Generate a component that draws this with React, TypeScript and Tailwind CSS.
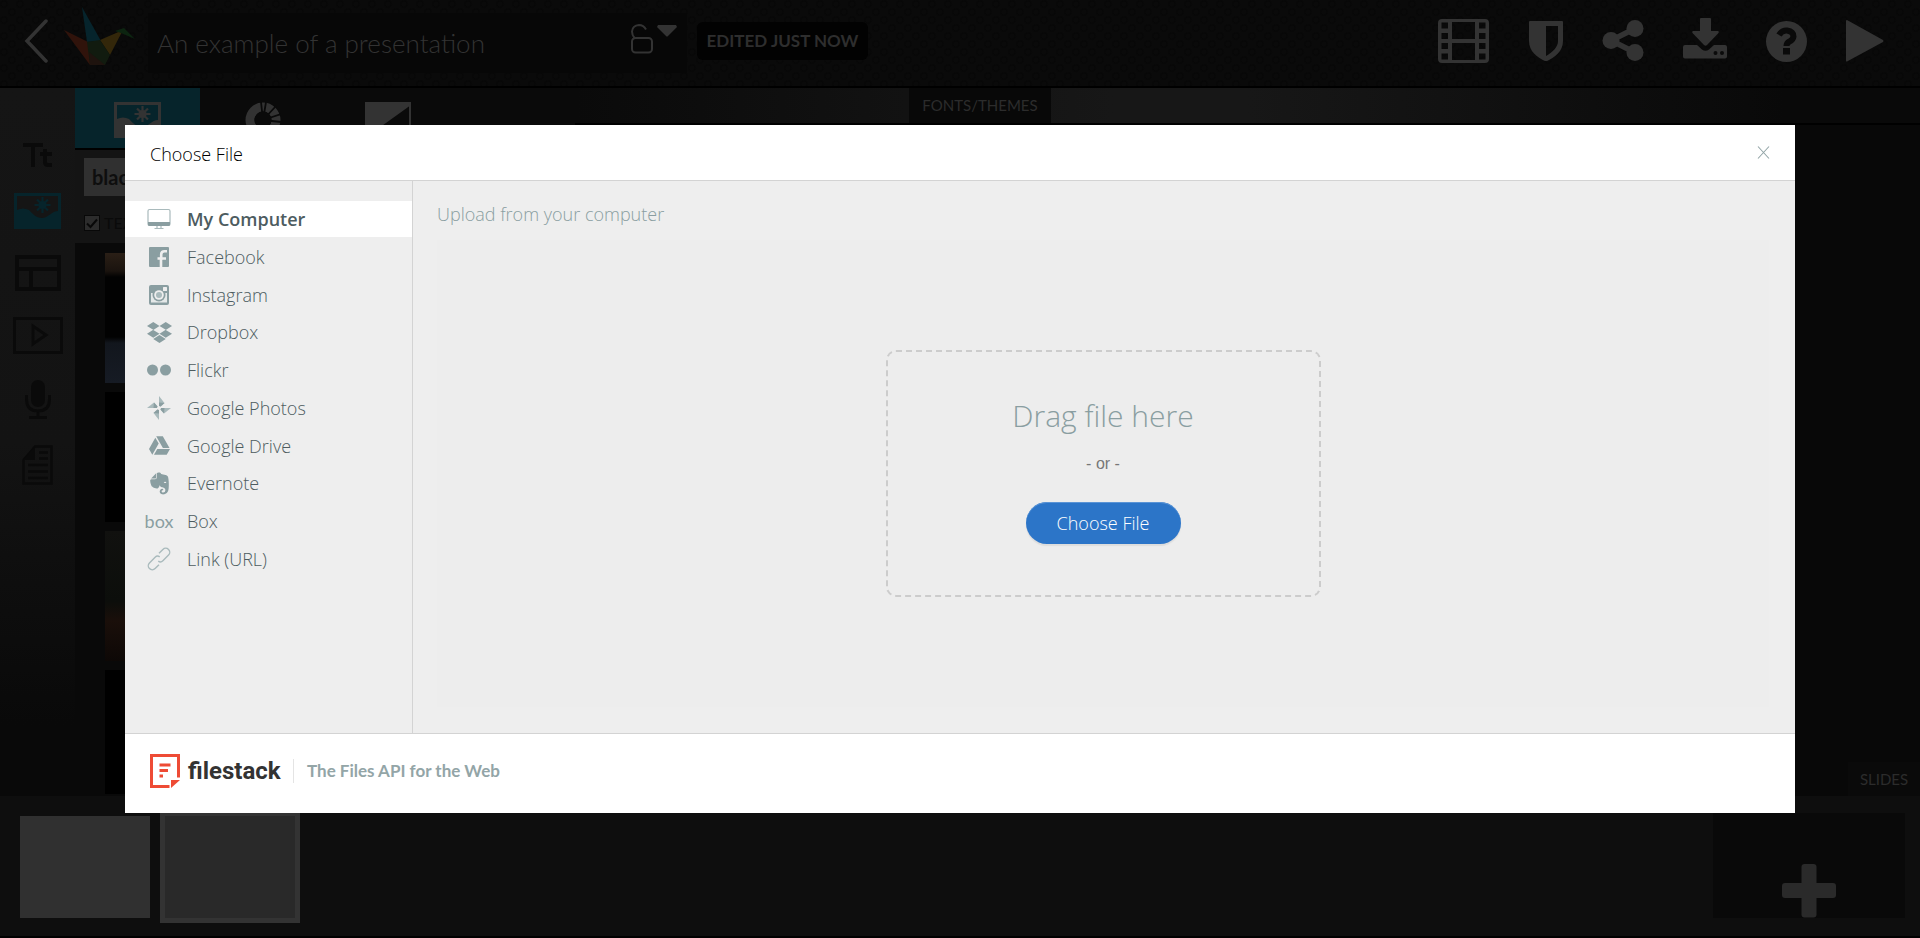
import type { ReactNode } from "react";
import { FaDropbox, FaEvernote, FaGoogleDrive } from "react-icons/fa";

const ACCENT = "#8a9ea1";
const ACCENT_LIGHT = "#a9babc";

function CraneLogo() {
  return (
    <svg width="72" height="60" viewBox="0 0 72 60" aria-hidden="true">
      <path d="M18 0 L37 34 L23 35 Z" fill="#06242c" />
      <path d="M0 23 L24 35 L36 58 L26 58 Z" fill="#30130b" />
      <path d="M36 33 L59 23 L46 48 Z" fill="#33270a" />
      <path d="M51 24 L60 21 L71 32 L57 26 Z" fill="#0c2410" />
      <path d="M23 35 L36 33 L46 48 L41 58 L26 58 L25 50 Z" fill="#111b0f" />
      <path d="M25 45 L41 58 L26 58 Z" fill="#1e130e" />
    </svg>
  );
}

function PictureIcon({ hole }: { hole: string }) {
  return (
    <svg width="48" height="36" viewBox="0 0 48 36" aria-hidden="true">
      <rect width="47" height="36" fill="currentColor" />
      <path d="M3 3 H44 V18 C38 18 34 25 28 25 C22 25 19 21 15 17 C11 15 7 15 3 17 Z" fill={hole} />
      <path d="M28.500 4 V20 M20.500 12 H36.500 M23 6.500 L34 17.500 M34 6.500 L23 17.500" stroke="currentColor" strokeWidth="2.200" />
      <circle cx="28.500" cy="12" r="4" fill="currentColor" />
    </svg>
  );
}

const toolbar: { name: string; icon: ReactNode }[] = [
  {
    name: "Slides video",
    icon: (
      <svg width="52" height="44" viewBox="0 0 52 44">
        <path fillRule="evenodd" d="M4 0 H47 Q51 0 51 4 V40 Q51 44 47 44 H4 Q0 44 0 40 V4 Q0 0 4 0 Z M14 3 V20 H37 V3 Z M14 24 V41 H37 V24 Z M3.500 3.500 V9.500 H10 V3.500 Z M3.500 14 V20 H10 V14 Z M3.500 24 V30 H10 V24 Z M3.500 34.500 V40.500 H10 V34.500 Z M41 3.500 V9.500 H47.500 V3.500 Z M41 14 V20 H47.500 V14 Z M41 24 V30 H47.500 V24 Z M41 34.500 V40.500 H47.500 V34.500 Z" fill="currentColor" />
      </svg>
    ),
  },
  {
    name: "Privacy",
    icon: (
      <svg width="34" height="40" viewBox="0 0 34 40">
        <path fillRule="evenodd" d="M1 0 H33 Q34 0 34 1 V20 C34 31 25 37 17 40.500 C9 37 0 31 0 20 V1 Q0 0 1 0 Z M17 5 V35 C24 31 29 26 29 20 V5 Z" fill="currentColor" />
      </svg>
    ),
  },
  {
    name: "Share",
    icon: (
      <svg width="42" height="42" viewBox="0 0 42 42">
        <path d="M33 8.500 L9 20.500 L33 32.500" fill="none" stroke="currentColor" strokeWidth="5.500" />
        <circle cx="33" cy="8.500" r="8.500" fill="currentColor" />
        <circle cx="9" cy="20.500" r="8.500" fill="currentColor" />
        <circle cx="33" cy="32.500" r="8.500" fill="currentColor" />
      </svg>
    ),
  },
  {
    name: "Download",
    icon: (
      <svg width="44" height="46" viewBox="0 0 44 46">
        <path d="M18 0 H27 Q28 0 28 1 V13 H35 Q36.500 13.500 35.500 15 L24 27 Q22.500 28.500 21 27 L9.500 15 Q8.500 13.500 10 13 H17 V1 Q17 0 18 0 Z" fill="currentColor" />
        <path fillRule="evenodd" d="M2 27 H14 L19 31.500 Q22.500 34 26 31.500 L31 27 H42 Q44 27 44 29 V38.500 Q44 40.500 42 40.500 H2 Q0 40.500 0 38.500 V29 Q0 27 2 27 Z M30.500 35 a2 2 0 1 0 4 0 a2 2 0 1 0 -4 0 M37 35 a2 2 0 1 0 4 0 a2 2 0 1 0 -4 0" fill="currentColor" />
      </svg>
    ),
  },
  {
    name: "Help",
    icon: (
      <svg width="41" height="41" viewBox="0 0 41 41">
        <circle cx="20.500" cy="20.500" r="20.500" fill="currentColor" />
        <path d="M13 14 Q16 9 21 9.500 Q27.500 10.500 27.500 15.500 Q27 19 23.500 20.500 Q20.500 22 20.500 25" fill="none" stroke="#0a0a0a" strokeWidth="6" />
        <rect x="17" y="27" width="7" height="6.500" fill="#0a0a0a" />
      </svg>
    ),
  },
  {
    name: "Play",
    icon: (
      <svg width="38" height="42" viewBox="0 0 38 42">
        <path d="M1 0 L37 20 Q38 21 37 22 L1 41.500 Q0 41.500 0 41 V1 Q0 0 1 0 Z" fill="currentColor" />
      </svg>
    ),
  },
];

const rail: { name: string; className: string; icon: ReactNode }[] = [
  {
    name: "Text",
    className: "text-[#0a0a0a]",
    icon: (
      <svg width="30" height="24" viewBox="0 0 30 24">
        <path d="M0 2 H20 M10 2 V24" stroke="currentColor" strokeWidth="4" fill="none" />
        <path d="M22 6 V19 Q22 22 25 22 H29 M17 11 H29" stroke="currentColor" strokeWidth="4" fill="none" />
      </svg>
    ),
  },
  { name: "Images", className: "text-[#06242b]", icon: <PictureIcon hole="#151515" /> },
  {
    name: "Layouts",
    className: "text-[#0a0a0a]",
    icon: (
      <svg width="46" height="36" viewBox="0 0 46 36">
        <path d="M2 2 H44 V34 H2 Z M2 14 H44 M16 14 V34" fill="none" stroke="currentColor" strokeWidth="4" />
      </svg>
    ),
  },
  {
    name: "Video",
    className: "text-[#0a0a0a]",
    icon: (
      <svg width="50" height="37" viewBox="0 0 50 37">
        <path d="M1.500 1.500 H48.500 V35.500 H1.500 Z M20 9 V27 L33 18 Z" fill="none" stroke="currentColor" strokeWidth="3" />
      </svg>
    ),
  },
  {
    name: "Audio",
    className: "text-[#0a0a0a]",
    icon: (
      <svg width="26" height="39" viewBox="0 0 26 39">
        <rect x="6" y="0" width="14" height="27" rx="7" fill="currentColor" />
        <path d="M1.500 15 V19 Q1.500 31 13 31 Q24.500 31 24.500 19 V15 M13 31 V37 M4 37.500 H22" fill="none" stroke="currentColor" strokeWidth="3" />
      </svg>
    ),
  },
  {
    name: "Notes",
    className: "text-[#0a0a0a]",
    icon: (
      <svg width="31" height="40" viewBox="0 0 31 40">
        <path d="M1.500 15 L13 1.500 H29.500 V38.500 H1.500 Z M6 20 H26 M6 26.500 H26 M6 33 H26 M17 7.500 H26 M17 13.500 H26" fill="none" stroke="currentColor" strokeWidth="2.500" />
        <path d="M1 15 L13 1 V15 Z" fill="currentColor" />
      </svg>
    ),
  },
];

const sources: { name: string; icon: ReactNode }[] = [
  {
    name: "My Computer",
    icon: (
      <svg width="24" height="24" viewBox="0 0 24 24">
        <rect x="1" y="2.500" width="22" height="16" rx="1.500" fill="none" stroke={ACCENT_LIGHT} strokeWidth="1.200" />
        <path d="M1 15 H23 V17.500 Q23 19 21.500 19 H2.500 Q1 19 1 17.500 Z" fill={ACCENT} />
        <path d="M10 19 V21 M14 19 V21 M7.500 21.500 H16.500" stroke={ACCENT_LIGHT} strokeWidth="1.200" />
      </svg>
    ),
  },
  {
    name: "Facebook",
    icon: (
      <svg width="24" height="24" viewBox="0 0 24 24">
        <rect x="2" y="2" width="20" height="20" rx="1" fill={ACCENT} />
        <path d="M14 22 V14 M10.500 13.500 H19 M14.200 15 V9.500 Q14.200 6.200 17.500 6.200 H20" fill="none" stroke="#eeeeee" strokeWidth="2.600" />
      </svg>
    ),
  },
  {
    name: "Instagram",
    icon: (
      <svg width="24" height="24" viewBox="0 0 24 24">
        <rect x="2" y="2" width="20" height="20" rx="2" fill={ACCENT} />
        <path d="M4 10 H20 V19.500 H4 Z" fill="#e4e8e8" />
        <circle cx="12" cy="12" r="6.500" fill={ACCENT} />
        <circle cx="12" cy="12" r="4.800" fill="#eeeeee" />
        <circle cx="12" cy="12" r="3" fill={ACCENT_LIGHT} />
        <rect x="16" y="4" width="4" height="4" rx="0.500" fill="#eeeeee" />
      </svg>
    ),
  },
  { name: "Dropbox", icon: <FaDropbox size={25} color={ACCENT} className="shrink-0" /> },
  {
    name: "Flickr",
    icon: (
      <svg width="24" height="24" viewBox="0 0 24 24">
        <circle cx="5.500" cy="12" r="5.500" fill={ACCENT} />
        <circle cx="18.500" cy="12" r="5.500" fill={ACCENT} />
      </svg>
    ),
  },
  {
    name: "Google Photos",
    icon: (
      <svg width="24" height="24" viewBox="0 0 24 24">
        {[0, 90, 180, 270].map((angle) => (
          <g key={angle} transform={`rotate(${angle} 12 12)`}>
            <path d="M12 0 L17.500 7 L12 12 Z" fill={ACCENT_LIGHT} />
            <path d="M12 6.500 L17.500 7 L12 12 Z" fill={ACCENT} />
          </g>
        ))}
        <circle cx="12" cy="12" r="2" fill="#eeeeee" />
      </svg>
    ),
  },
  { name: "Google Drive", icon: <FaGoogleDrive size={21} color={ACCENT} /> },
  { name: "Evernote", icon: <FaEvernote size={25} color={ACCENT} className="shrink-0" /> },
  {
    name: "Box",
    icon: <span className="font-['Lato',sans-serif] text-lg font-normal leading-6 text-[#8a9ea1]">box</span>,
  },
  {
    name: "Link (URL)",
    icon: (
      <svg width="24" height="24" viewBox="0 0 24 24">
        <g transform="rotate(-45 12 12)" fill="none" stroke={ACCENT_LIGHT} strokeWidth="1.400">
          <path d="M8 16 H2.500 A4 4 0 0 1 2.500 8 H10.500 Q13.500 8 14 11" />
          <path d="M16 8 H21.500 A4 4 0 0 1 21.500 16 H13.500 Q10.500 16 10 13" />
        </g>
      </svg>
    ),
  },
];

const thumbs = [
  "h-[130px] bg-[linear-gradient(to_bottom,#2a1f16_0,#1a130e_18px,#020202_24px,#020202_84px,#12161d_90px,#161b24_130px)]",
  "h-[130px] bg-black",
  "h-[130px] bg-[linear-gradient(to_bottom,#11110f_0,#0c0e0b_70px,#1a0f0a_90px,#0d0806_130px)]",
  "flex-1 bg-black",
];

function Header() {
  return (
    <header className="flex h-[88px] shrink-0 items-center border-b-2 border-black bg-[#0a0a0a] bg-[radial-gradient(circle_at_4px_4px,#0a0a0a_2px,#070707_3px,transparent_5px),radial-gradient(circle_at_12px_12px,#0a0a0a_2px,#070707_3px,transparent_5px)] bg-size-[16px_16px] text-[#333333]">
      <button aria-label="Back" className="mb-1 ml-6">
        <svg width="24" height="44" viewBox="0 0 24 44">
          <path d="M22 2 L3 22 L22 42" fill="none" stroke="currentColor" strokeWidth="3.500" strokeLinecap="round" />
        </svg>
      </button>
      <div className="mb-3 ml-4">
        <CraneLogo />
      </div>
      <div className="ml-3 flex h-[60px] w-[539px] items-center bg-[#070707] pl-[9px] pr-[10px]">
        <input
          aria-label="Presentation title"
          defaultValue="An example of a presentation"
          className="min-w-0 flex-1 bg-transparent font-['Lato',sans-serif] text-[26px] font-light text-[#333333] outline-none"
        />
        <button aria-label="Sharing" className="mb-2 flex gap-1">
          <svg width="22" height="30" viewBox="0 0 22 30">
            <rect x="1" y="14" width="20" height="14.500" rx="3.500" fill="none" stroke="currentColor" strokeWidth="2" />
            <path d="M3.500 14 Q1 11 1 7.500 Q1.500 1.500 8 1 Q12.500 1 15 5.500" fill="none" stroke="currentColor" strokeWidth="2" />
          </svg>
          <svg width="20" height="14" viewBox="0 0 20 14">
            <path d="M1 1 H19 L20 3 L11 12 Q10 13 9 12 L0 3 Z" fill="currentColor" />
          </svg>
        </button>
      </div>
      <span className="mb-1 ml-[10px] flex h-[38px] w-[171px] items-center justify-center whitespace-nowrap rounded-md bg-[#020202] font-['Lato',sans-serif] text-[17px] font-bold text-[#2e2e2e]">
        EDITED JUST NOW
      </span>
      <nav className="mb-1 ml-auto mr-9 flex items-center gap-[39px]">
        {toolbar.map((t) => (
          <button key={t.name} aria-label={t.name}>
            {t.icon}
          </button>
        ))}
      </nav>
    </header>
  );
}

function Workspace() {
  return (
    <div className="flex min-h-0 flex-1 bg-[#080808]">
      <nav className="flex w-[75px] shrink-0 flex-col items-center gap-[26px] bg-[linear-gradient(to_bottom,#151515_0,#131313_50%,#090909_90%)] pt-[55px]">
        {rail.map((r) => (
          <button key={r.name} aria-label={r.name} className={r.className}>
            {r.icon}
          </button>
        ))}
      </nav>
      <aside className="flex w-[500px] shrink-0 flex-col">
        <div className="flex h-[62px] shrink-0 border-b-2 border-black bg-[#0a0a0a] text-[#333333]">
          <button aria-label="Pictures" className="flex w-[125px] justify-center bg-[#06242b] pt-[14px]">
            <PictureIcon hole="#06242b" />
          </button>
          <button aria-label="Shapes" className="flex w-[125px] justify-center pt-[14px]">
            <svg width="36" height="36" viewBox="0 0 36 36">
              <circle cx="18" cy="18" r="13" fill="none" stroke="currentColor" strokeWidth="9" />
              <path d="M18 18 L16 0 M18 18 L21 0 M18 18 L31 4 M18 18 L36 12 M18 18 L36 20" stroke="#0a0a0a" strokeWidth="1.800" />
              <circle cx="18" cy="18" r="8.500" fill="#0a0a0a" />
            </svg>
          </button>
          <button aria-label="Backgrounds" className="flex w-[125px] justify-center pt-[14px]">
            <svg width="46" height="36" viewBox="0 0 46 36">
              <rect x="1" y="1" width="44" height="34" fill="none" stroke="currentColor" strokeWidth="2" />
              <path d="M0 0 H46 V3 L0 36 Z" fill="currentColor" />
            </svg>
          </button>
        </div>
        <div className="h-[93px] shrink-0 bg-[#141414] px-[9px] pt-2">
          <input
            aria-label="Search"
            defaultValue="black"
            className="h-[38px] w-full bg-[#303030] px-2 font-['Lato',sans-serif] text-xl font-bold text-[#0e0e0e] outline-none"
          />
          <label className="mt-[15px] flex items-center gap-1 font-['Lato',sans-serif] text-base leading-6 text-[#0a0a0a]">
            <span className="grid size-4">
              <input
                type="checkbox"
                defaultChecked
                className="peer col-start-1 row-start-1 size-4 appearance-none border border-[#080808] bg-[#2c2c2c]"
              />
              <svg
                viewBox="0 0 16 16"
                className="pointer-events-none invisible col-start-1 row-start-1 size-4 peer-checked:visible"
              >
                <path d="M3 8.500 L6.500 12 L13 4.500" fill="none" stroke="#080808" strokeWidth="2" />
              </svg>
            </span>
            TEXT
          </label>
        </div>
        <div className="flex min-h-0 flex-1 flex-col gap-[9px] bg-[#090909] pl-[30px] pt-[10px] pb-[2px]">
          {thumbs.map((t, i) => (
            <div key={i} className={`w-[200px] shrink-0 ${t}`} />
          ))}
        </div>
      </aside>
      <main className="flex min-w-0 flex-1 flex-col">
        <div className="flex h-[37px] shrink-0 border-b-2 border-black bg-[linear-gradient(to_right,#0a0a0a_0,#171717_40%,#171717_50%,#090909_90%)] pl-[334px]">
          <button className="w-[142px] whitespace-nowrap bg-[#080808] font-['Lato',sans-serif] text-[15px] text-[#2c2c2c]">
            FONTS/THEMES
          </button>
        </div>
        <div className="flex flex-1 items-end justify-end">
          <span className="flex h-[34px] w-[72px] items-center justify-center bg-[#0a0a0a] font-['Lato',sans-serif] text-[15px] text-[#2c2c2c]">
            SLIDES
          </span>
        </div>
      </main>
    </div>
  );
}

function SlideStrip() {
  return (
    <section className="flex h-[142px] shrink-0 items-start border-b-2 border-black bg-[#0e0e0e] pl-5 pr-[15px] pt-[15px]">
      <button aria-label="Slide 1" className="mt-[5px] h-[102px] w-[130px] bg-[#303030]" />
      <button aria-label="Slide 2" className="ml-[10px] h-[112px] w-[140px] border-[5px] border-[#333333] bg-[#292929]" />
      <button
        aria-label="Add slide"
        className="ml-auto mt-[2px] flex h-[105px] w-[192px] items-end justify-center bg-[#090909] text-[#2a2a2a]"
      >
        <svg width="54" height="54" viewBox="0 0 54 54">
          <rect x="19.500" width="15" height="53.500" rx="3" fill="currentColor" />
          <rect y="19" width="54" height="15" rx="3" fill="currentColor" />
        </svg>
      </button>
    </section>
  );
}

function FilePicker() {
  return (
    <div
      role="dialog"
      aria-label="Choose File"
      className="absolute inset-[125px] flex flex-col bg-white font-['Open_Sans',sans-serif] text-lg font-light"
    >
      <header className="flex h-14 shrink-0 items-center justify-between border-b border-[#d3d3d3] px-[25px]">
        <h1 className="pt-[2px] text-black">Choose File</h1>
        <button aria-label="Close">
          <svg width="13" height="13" viewBox="0 0 13 13">
            <path d="M1 0.500 L12 12.500 M12 0.500 L1 12.500" stroke="#93a5a7" strokeWidth="1.100" />
          </svg>
        </button>
      </header>
      <div className="flex min-h-0 flex-1 bg-[#eeeeee]">
        <nav className="w-72 shrink-0 border-r border-[#d3d3d3] pt-5">
          <ul className="flex h-[376px] flex-col justify-between text-[#4d5c5f]">
            {sources.map((s, i) => (
              <li key={s.name}>
                <a
                  href="#"
                  className={
                    i === 0
                      ? "flex h-9 items-center bg-white pl-[22px] font-semibold"
                      : "flex h-9 items-center pl-[22px]"
                  }
                >
                  <span className="flex w-6 shrink-0 justify-center">{s.icon}</span>
                  <span className="pl-4">{s.name}</span>
                </a>
              </li>
            ))}
          </ul>
        </nav>
        <section className="flex min-w-0 flex-1 flex-col pb-[26px] pl-6 pr-[26px] pt-[19px]">
          <h2 className="leading-7 text-[#8a9ea1]">Upload from your computer</h2>
          <div className="mt-3 flex flex-1 items-center justify-center bg-[#ededed]">
            <div className="flex h-[247px] w-[435px] flex-col items-center rounded-[10px] border-2 border-dashed border-[#cccccc] pt-[42px]">
              <p className="text-3xl leading-[44px] text-[#8a9ea1]">Drag file here</p>
              <p className="mt-[14px] font-['Liberation_Sans',sans-serif] text-base font-normal text-[#777777]">- or -</p>
              <button className="mt-[26px] h-[42px] w-[155px] rounded-full bg-[#2c75c8] text-white shadow-[inset_0_1px_0_#5a94d6,0_2px_1px_#dddddd]">
                Choose File
              </button>
            </div>
          </div>
        </section>
      </div>
      <footer className="flex h-20 shrink-0 items-center border-t border-[#d3d3d3] pb-[5px] pl-[25px]">
        <svg width="30" height="34" viewBox="0 0 30 34" aria-hidden="true">
          <path d="M28.500 23.500 V1.500 H1.500 V32.500 H19.500" fill="none" stroke="#ee4b35" strokeWidth="3" />
          <path d="M21 26 H30 L21 34 Z" fill="#ee4b35" />
          <path d="M9.500 11 H20.500 M9.500 16.500 H18 M9.500 22 H13" stroke="#ee4b35" strokeWidth="3" />
        </svg>
        <span className="ml-2 w-[91px] whitespace-nowrap font-['Roboto',sans-serif] text-2xl font-bold text-[#333333]">
          filestack
        </span>
        <span className="ml-[14px] h-6 w-px bg-[#e4e4e4]" />
        <span className="ml-[13px] font-['Lato',sans-serif] text-[17px] font-bold text-[#93a5a7]">
          The Files API for the Web
        </span>
      </footer>
    </div>
  );
}

export default function App() {
  return (
    <div className="relative flex h-screen min-h-[700px] flex-col overflow-hidden bg-[#080808]">
      <Header />
      <Workspace />
      <SlideStrip />
      <FilePicker />
    </div>
  );
}
